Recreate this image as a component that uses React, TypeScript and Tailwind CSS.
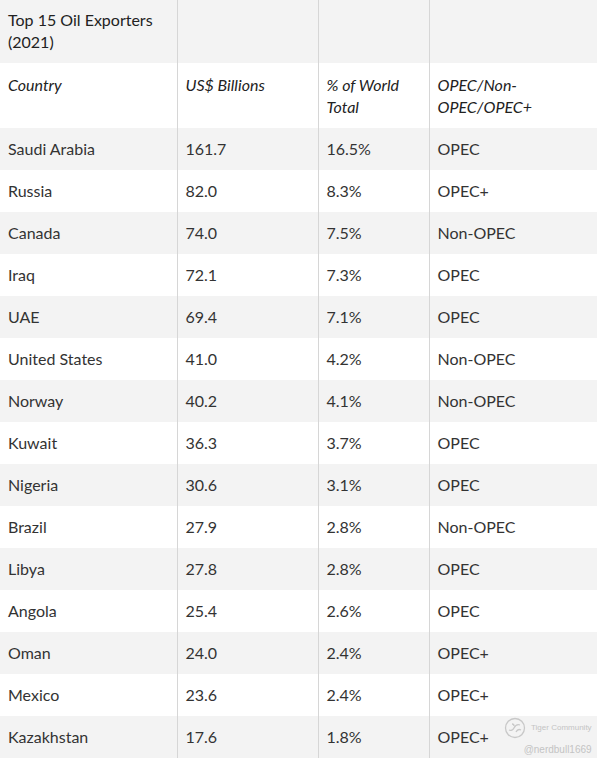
import React from "react";

const ROWS: [string, string, string, string][] = [
  ["Saudi Arabia", "161.7", "16.5%", "OPEC"],
  ["Russia", "82.0", "8.3%", "OPEC+"],
  ["Canada", "74.0", "7.5%", "Non-OPEC"],
  ["Iraq", "72.1", "7.3%", "OPEC"],
  ["UAE", "69.4", "7.1%", "OPEC"],
  ["United States", "41.0", "4.2%", "Non-OPEC"],
  ["Norway", "40.2", "4.1%", "Non-OPEC"],
  ["Kuwait", "36.3", "3.7%", "OPEC"],
  ["Nigeria", "30.6", "3.1%", "OPEC"],
  ["Brazil", "27.9", "2.8%", "Non-OPEC"],
  ["Libya", "27.8", "2.8%", "OPEC"],
  ["Angola", "25.4", "2.6%", "OPEC"],
  ["Oman", "24.0", "2.4%", "OPEC+"],
  ["Mexico", "23.6", "2.4%", "OPEC+"],
  ["Kazakhstan", "17.6", "1.8%", "OPEC+"],
];

const cell = "px-2 py-[10px] align-top text-left";
const sep = "border-l border-[#d6d6d6]";

export default function App() {
  return (
    <div className="relative w-[602px] bg-white font-['Lato',sans-serif] text-[16px] leading-[22px] text-[#333]">
      <table className="w-[597px] table-fixed border-collapse">
        <colgroup>
          <col className="w-[177px]" />
          <col className="w-[141px]" />
          <col className="w-[111px]" />
          <col />
        </colgroup>
        <tbody>
          <tr className="bg-[#f3f3f3]">
            <td className={`${cell} pt-[9px] pb-[10px] text-[#222]`}>Top 15 Oil Exporters (2021)</td>
            <td className={`${cell} ${sep}`} />
            <td className={`${cell} ${sep}`} />
            <td className={`${cell} ${sep}`} />
          </tr>
          <tr className="bg-white italic text-[#222]">
            <td className={`${cell} pt-[11px]`}>Country</td>
            <td className={`${cell} ${sep} pt-[11px]`}>US$ Billions</td>
            <td className={`${cell} ${sep} pt-[11px]`}>% of World Total</td>
            <td className={`${cell} ${sep} pt-[11px]`}>OPEC/Non-OPEC/OPEC+</td>
          </tr>
          {ROWS.map((r, i) => (
            <tr key={r[0]} className={i % 2 === 0 ? "bg-[#f3f3f3]" : "bg-white"}>
              <td className={cell}>{r[0]}</td>
              <td className={`${cell} ${sep}`}>{r[1]}</td>
              <td className={`${cell} ${sep}`}>{r[2]}</td>
              <td className={`${cell} ${sep}`}>{r[3]}</td>
            </tr>
          ))}
        </tbody>
      </table>

      {/* watermark */}
      <div className="pointer-events-none absolute left-[503px] top-[716px] flex flex-col items-end text-[#c4c4c4]">
        <div className="flex items-center gap-1">
          <svg width="24" height="24" viewBox="0 0 24 24" fill="none" stroke="#c8c8c8" strokeWidth="1.3">
            <circle cx="12" cy="12" r="9.5" />
            <path d="M6 14c2 1 4 0 5-2s3-4 6-3" />
            <path d="M13 16c1-2 3-3 5-2" />
            <path d="M9 8c1 0 2 1 2 2" />
          </svg>
          <span className="font-['Liberation_Sans',sans-serif] text-[8px] leading-[10px]">Tiger Community</span>
        </div>
        <span className="mt-[4px] font-['Liberation_Sans',sans-serif] text-[10px] leading-[12px]">@nerdbull1669</span>
      </div>
    </div>
  );
}
